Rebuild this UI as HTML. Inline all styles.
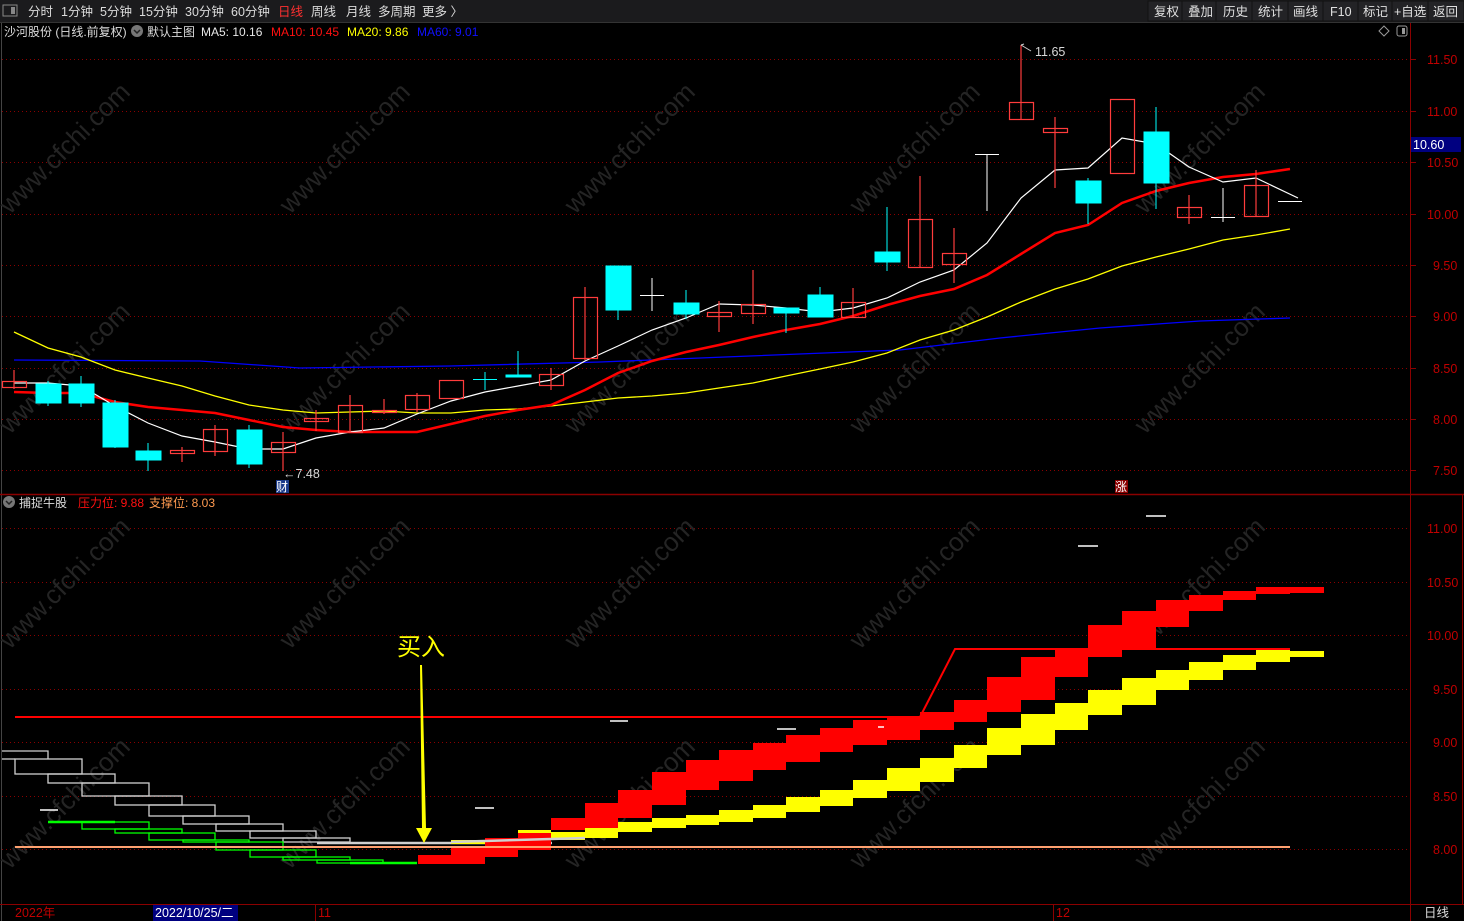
<!DOCTYPE html>
<html><head><meta charset="utf-8"><style>
body{margin:0;width:1464px;height:921px;background:#000;overflow:hidden;font-family:"Liberation Sans","Noto Sans CJK SC",sans-serif}
svg{display:block}
text{font-family:"Liberation Sans","Noto Sans CJK SC",sans-serif}
</style></head><body>
<svg width="1464" height="921" viewBox="0 0 1464 921" xmlns="http://www.w3.org/2000/svg">
<rect width="1464" height="921" fill="#000"/>
<rect x="0" y="0" width="1464" height="22" fill="#1b1b1d"/>
<line x1="0" y1="22.5" x2="1464" y2="22.5" stroke="#333"/>
<rect x="3" y="5" width="14" height="11" fill="none" stroke="#888"/><rect x="11" y="7" width="4" height="7" fill="#888"/>
<g font-size="12.5" fill="#dcdcdc">
<text x="28" y="16">分时</text><text x="61" y="16">1分钟</text><text x="100" y="16">5分钟</text><text x="139" y="16">15分钟</text><text x="185" y="16">30分钟</text><text x="231" y="16">60分钟</text><text x="278" y="16" fill="#ff3030">日线</text><text x="311" y="16">周线</text><text x="346" y="16">月线</text><text x="378" y="16">多周期</text><text x="422" y="16">更多 〉</text>
</g>
<g fill="#232326" stroke="#111">
<rect x="1148" y="1" width="34" height="20"/><rect x="1182" y="1" width="34" height="20"/><rect x="1216" y="1" width="36" height="20"/><rect x="1252" y="1" width="36" height="20"/><rect x="1288" y="1" width="35" height="20"/><rect x="1323" y="1" width="35" height="20"/><rect x="1358" y="1" width="34" height="20"/><rect x="1392" y="1" width="36" height="20"/><rect x="1428" y="1" width="36" height="20"/>
</g>
<g font-size="12.5" fill="#e0e0e0">
<text x="1154" y="16">复权</text><text x="1188" y="16">叠加</text><text x="1223" y="16">历史</text><text x="1258" y="16">统计</text><text x="1293" y="16">画线</text><text x="1330" y="16">F10</text><text x="1363" y="16">标记</text><text x="1394" y="16">+自选</text><text x="1433" y="16">返回</text>
</g>
<line x1="1.5" y1="23" x2="1.5" y2="921" stroke="#444"/>
<line x1="1410.5" y1="23" x2="1410.5" y2="921" stroke="#8b0000"/>
<line x1="0" y1="494.5" x2="1464" y2="494.5" stroke="#8b0000" stroke-width="1.5"/>
<line x1="0" y1="904.5" x2="1464" y2="904.5" stroke="#8b0000"/>
<line x1="1462.5" y1="494" x2="1462.5" y2="904" stroke="#8b0000"/>
<g stroke="#8b0000" stroke-dasharray="1,3">
<line x1="2" y1="59.5" x2="1410" y2="59.5"/><line x1="2" y1="111.5" x2="1410" y2="111.5"/><line x1="2" y1="162.5" x2="1410" y2="162.5"/><line x1="2" y1="214.5" x2="1410" y2="214.5"/><line x1="2" y1="265.5" x2="1410" y2="265.5"/><line x1="2" y1="316.5" x2="1410" y2="316.5"/><line x1="2" y1="368.5" x2="1410" y2="368.5"/><line x1="2" y1="419.5" x2="1410" y2="419.5"/><line x1="2" y1="470.5" x2="1410" y2="470.5"/>
<line x1="2" y1="528.5" x2="1410" y2="528.5"/><line x1="2" y1="582.5" x2="1410" y2="582.5"/><line x1="2" y1="635.5" x2="1410" y2="635.5"/><line x1="2" y1="689.5" x2="1410" y2="689.5"/><line x1="2" y1="742.5" x2="1410" y2="742.5"/><line x1="2" y1="796.5" x2="1410" y2="796.5"/><line x1="2" y1="849.5" x2="1410" y2="849.5"/>
</g>
<g stroke="#8b0000"><line x1="1411" y1="59.5" x2="1416" y2="59.5"/><line x1="1411" y1="111.5" x2="1416" y2="111.5"/><line x1="1411" y1="162.5" x2="1416" y2="162.5"/><line x1="1411" y1="214.5" x2="1416" y2="214.5"/><line x1="1411" y1="265.5" x2="1416" y2="265.5"/><line x1="1411" y1="316.5" x2="1416" y2="316.5"/><line x1="1411" y1="368.5" x2="1416" y2="368.5"/><line x1="1411" y1="419.5" x2="1416" y2="419.5"/><line x1="1411" y1="470.5" x2="1416" y2="470.5"/></g>
<g font-size="12.5" fill="#c00000">
<text x="1427" y="64">11.50</text><text x="1427" y="116">11.00</text><text x="1427" y="167">10.50</text><text x="1427" y="219">10.00</text><text x="1433" y="270">9.50</text><text x="1433" y="321">9.00</text><text x="1433" y="373">8.50</text><text x="1433" y="424">8.00</text><text x="1433" y="475">7.50</text>
<text x="1427" y="533">11.00</text><text x="1427" y="587">10.50</text><text x="1427" y="640">10.00</text><text x="1433" y="694">9.50</text><text x="1433" y="747">9.00</text><text x="1433" y="801">8.50</text><text x="1433" y="854">8.00</text>
</g>
<rect x="1411" y="137" width="50" height="15" fill="#000080"/><text x="1413" y="149" font-size="12.5" fill="#fff">10.60</text>
<g font-size="26" fill="#242424" font-family="Liberation Sans">
<text transform="translate(10,215) rotate(-45)">www.cfchi.com</text><text transform="translate(290,215) rotate(-45)">www.cfchi.com</text><text transform="translate(575,215) rotate(-45)">www.cfchi.com</text><text transform="translate(860,215) rotate(-45)">www.cfchi.com</text><text transform="translate(1145,215) rotate(-45)">www.cfchi.com</text>
<text transform="translate(10,435) rotate(-45)">www.cfchi.com</text><text transform="translate(290,435) rotate(-45)">www.cfchi.com</text><text transform="translate(575,435) rotate(-45)">www.cfchi.com</text><text transform="translate(860,435) rotate(-45)">www.cfchi.com</text><text transform="translate(1145,435) rotate(-45)">www.cfchi.com</text>
<text transform="translate(10,650) rotate(-45)">www.cfchi.com</text><text transform="translate(290,650) rotate(-45)">www.cfchi.com</text><text transform="translate(575,650) rotate(-45)">www.cfchi.com</text><text transform="translate(860,650) rotate(-45)">www.cfchi.com</text><text transform="translate(1145,650) rotate(-45)">www.cfchi.com</text>
<text transform="translate(10,870) rotate(-45)">www.cfchi.com</text><text transform="translate(290,870) rotate(-45)">www.cfchi.com</text><text transform="translate(575,870) rotate(-45)">www.cfchi.com</text><text transform="translate(860,870) rotate(-45)">www.cfchi.com</text><text transform="translate(1145,870) rotate(-45)">www.cfchi.com</text>
</g>
<g font-size="12">
<text x="4" y="36" fill="#dcdcdc">沙河股份 (日线.前复权)</text>
<circle cx="137" cy="31" r="6" fill="#777"/><path d="M134 30l3 3 3-3" stroke="#222" stroke-width="1.5" fill="none"/>
<text x="147" y="36" fill="#dcdcdc">默认主图</text>
<text x="201" y="36" fill="#e8e8e8">MA5: 10.16</text>
<text x="271" y="36" fill="#ff1010">MA10: 10.45</text>
<text x="347" y="36" fill="#ffff00">MA20: 9.86</text>
<text x="417" y="36" fill="#1010ff">MA60: 9.01</text>
</g>
<path d="M1384 26l5 5-5 5-5-5z" fill="none" stroke="#999"/><rect x="1397" y="26" width="10" height="10" rx="2" fill="none" stroke="#999"/><rect x="1402" y="28" width="3" height="6" fill="#999"/>
<polyline fill="none" stroke="#0000ff" stroke-width="1.3" points="14,360 200,361 300,368 450,366 600,362 750,356 900,350 1000,338 1100,328 1200,321 1290,318"/>
<polyline fill="none" stroke="#ffff00" stroke-width="1.3" points="14,332 48,348 81,357 115,370 148,378 182,386 215,396 249,405 283,410 316,413 350,412 384,411 417,413 451,413 485,410 518,409 551,406 585,402 618,398 652,396 686,393 719,388 753,383 786,376 820,369 853,362 887,353 920,340 954,330 987,317 1021,302 1055,289 1088,279 1122,266 1156,257 1189,249 1223,240 1256,235 1290,229"/>
<polyline fill="none" stroke="#ff0000" stroke-width="2.5" points="14,392 48,393 81,393 115,402 148,407 182,410 215,413 249,420 283,427 316,430 350,432 384,432 417,432 451,424 485,416 518,410 551,405 585,390 618,373 652,361 686,352 719,345 753,337 786,330 820,324 853,316 887,305 920,296 954,289 987,275 1021,254 1055,233 1088,225 1122,203 1156,191 1189,183 1223,177 1256,174 1290,169"/>
<polyline fill="none" stroke="#ffffff" stroke-width="1.2" points="14,383 48,383 81,386 115,406 148,423 182,436 215,442 249,449 283,449 316,438 350,432 384,428 417,414 451,401 485,392 518,386 551,380 585,361 618,346 652,330 686,318 719,304 753,305 786,308 820,312 853,308 887,298 920,282 954,270 987,243 1021,198 1055,170 1088,168 1122,138 1156,144 1189,167 1223,182 1256,178 1298,198"/>
<g stroke="#ff3c3c" fill="none" stroke-width="1.2">
<line x1="14" y1="370" x2="14" y2="389"/><rect x="2.5" y="381.5" width="24" height="6"/>
<line x1="182" y1="447" x2="182" y2="462"/><rect x="170.5" y="450.5" width="24" height="3"/>
<line x1="215" y1="425" x2="215" y2="456"/><rect x="203.5" y="429.5" width="24" height="22"/>
<line x1="283" y1="432" x2="283" y2="471"/><rect x="271.5" y="442.5" width="24" height="10"/>
<line x1="316" y1="410" x2="316" y2="431"/><rect x="304.5" y="418.5" width="24" height="3"/>
<line x1="350" y1="395" x2="350" y2="432"/><rect x="338.5" y="405.5" width="24" height="27"/>
<line x1="384" y1="399" x2="384" y2="414"/><rect x="372.5" y="410.5" width="24" height="2"/>
<line x1="417" y1="393" x2="417" y2="412"/><rect x="405.5" y="395.5" width="24" height="14"/>
<rect x="439.5" y="380.5" width="24" height="18"/>
<line x1="551" y1="368" x2="551" y2="390"/><rect x="539.5" y="374.5" width="24" height="11"/>
<line x1="585" y1="287" x2="585" y2="360"/><rect x="573.5" y="297.5" width="24" height="61"/>
<line x1="719" y1="301" x2="719" y2="332"/><rect x="707.5" y="312.5" width="24" height="4"/>
<line x1="753" y1="270" x2="753" y2="324"/><rect x="741.5" y="304.5" width="24" height="9"/>
<line x1="853" y1="288" x2="853" y2="317"/><rect x="841.5" y="302.5" width="24" height="15"/>
<line x1="920" y1="176" x2="920" y2="267"/><rect x="908.5" y="219.5" width="24" height="48"/>
<line x1="954" y1="228" x2="954" y2="283"/><rect x="942.5" y="253.5" width="24" height="11"/>
<line x1="1021" y1="45" x2="1021" y2="119"/><rect x="1009.5" y="102.5" width="24" height="17"/>
<line x1="1055" y1="117" x2="1055" y2="188"/><rect x="1043.5" y="128.5" width="24" height="4"/>
<rect x="1110.5" y="99.5" width="24" height="74"/>
<line x1="1189" y1="195" x2="1189" y2="224"/><rect x="1177.5" y="207.5" width="24" height="10"/>
<line x1="1256" y1="170" x2="1256" y2="216"/><rect x="1244.5" y="185.5" width="24" height="31"/>
</g>
<g stroke="#00ffff" fill="#00ffff">
<line x1="48" y1="381" x2="48" y2="406"/><rect x="36" y="384" width="25" height="19"/>
<line x1="81" y1="376" x2="81" y2="407"/><rect x="69" y="384" width="25" height="19"/>
<line x1="115" y1="400" x2="115" y2="448"/><rect x="103" y="403" width="25" height="44"/>
<line x1="148" y1="443" x2="148" y2="471"/><rect x="136" y="451" width="25" height="9"/>
<line x1="249" y1="425" x2="249" y2="468"/><rect x="237" y="430" width="25" height="34"/>
<line x1="485" y1="372" x2="485" y2="390"/><line x1="473" y1="379.5" x2="497" y2="379.5"/>
<line x1="518" y1="351" x2="518" y2="377"/><rect x="506" y="375" width="25" height="2"/>
<line x1="618" y1="266" x2="618" y2="320"/><rect x="606" y="266" width="25" height="44"/>
<line x1="686" y1="290" x2="686" y2="319"/><rect x="674" y="303" width="25" height="11"/>
<line x1="786" y1="308" x2="786" y2="333"/><rect x="774" y="308" width="25" height="5"/>
<line x1="820" y1="287" x2="820" y2="317"/><rect x="808" y="295" width="25" height="22"/>
<line x1="887" y1="207" x2="887" y2="271"/><rect x="875" y="252" width="25" height="10"/>
<line x1="1088" y1="178" x2="1088" y2="224"/><rect x="1076" y="181" width="25" height="22"/>
<line x1="1156" y1="107" x2="1156" y2="209"/><rect x="1144" y="132" width="25" height="51"/>
</g>
<g stroke="#fff">
<line x1="652" y1="278" x2="652" y2="311"/><line x1="640" y1="295.5" x2="664" y2="295.5"/>
<line x1="987" y1="154" x2="987" y2="211"/><line x1="975" y1="154.5" x2="999" y2="154.5"/>
<line x1="1223" y1="188" x2="1223" y2="222"/><line x1="1211" y1="217.5" x2="1235" y2="217.5"/>
<line x1="1278" y1="201.5" x2="1302" y2="201.5"/>
</g>
<path d="M1021 45l3 -1M1021 45l10 6" stroke="#ccc" fill="none"/>
<text x="1035" y="56" font-size="12.5" fill="#d8d8d8">11.65</text>
<text x="283" y="478" font-size="12.5" fill="#d8d8d8">←7.48</text>
<rect x="276" y="480" width="13" height="13" fill="#1a3a8a"/><text x="276" y="491" font-size="12" fill="#fff">财</text>
<rect x="1115" y="480" width="13" height="13" fill="#8b0000"/><text x="1115" y="491" font-size="12" fill="#fff">涨</text>
<circle cx="9" cy="502" r="6" fill="#777"/><path d="M6 501l3 3 3-3" stroke="#222" stroke-width="1.5" fill="none"/>
<g font-size="12"><text x="19" y="507" fill="#dcdcdc">捕捉牛股</text><text x="78" y="507" fill="#ff1010">压力位: 9.88</text><text x="149" y="507" fill="#ff9a50">支撑位: 8.03</text></g>
<g fill="none" stroke="#d0d0d0" stroke-width="1.3">
<path d="M2 751H48V759"/><line x1="2" y1="759" x2="15" y2="759"/>
<rect x="15" y="759" width="67" height="15"/><rect x="48" y="774" width="67" height="9"/><rect x="82" y="783" width="67" height="13"/><rect x="115" y="796" width="67" height="9"/><rect x="149" y="805" width="66" height="11"/><rect x="183" y="816" width="66" height="8"/><rect x="216" y="824" width="67" height="7"/><rect x="250" y="831" width="66" height="7"/><rect x="283" y="838" width="67" height="4"/>
</g>
<line x1="317" y1="843" x2="552" y2="843" stroke="#d0d0d0" stroke-width="2.5"/>
<g fill="none" stroke="#00ff00" stroke-width="1.3">
<line x1="48" y1="822" x2="115" y2="822" stroke-width="2.5"/>
<rect x="82" y="822" width="67" height="7"/><rect x="115" y="829" width="67" height="4"/><rect x="149" y="833" width="66" height="7"/><rect x="183" y="840" width="66" height="2"/><rect x="216" y="842" width="67" height="8"/><rect x="250" y="850" width="66" height="7"/><rect x="283" y="857" width="67" height="3"/><rect x="317" y="860" width="66" height="3"/>
<line x1="350" y1="863" x2="417" y2="863" stroke-width="2.5"/>
</g>
<line x1="15" y1="717" x2="920" y2="717" stroke="#ff0000" stroke-width="2"/>
<polyline points="920,717 955,649 1290,649" fill="none" stroke="#ff0000" stroke-width="2"/>
<g fill="#ffff00">
<rect x="451" y="840" width="34" height="4"/><rect x="518" y="830" width="33" height="5"/><rect x="551" y="832" width="34" height="8"/><rect x="585" y="826" width="33" height="12"/><rect x="618" y="822" width="34" height="10"/><rect x="652" y="818" width="34" height="10"/><rect x="686" y="815" width="33" height="10"/><rect x="719" y="810" width="34" height="12"/><rect x="753" y="805" width="33" height="13"/><rect x="786" y="797" width="34" height="15"/><rect x="820" y="790" width="33" height="16"/><rect x="853" y="780" width="34" height="18"/><rect x="887" y="768" width="33" height="23"/><rect x="920" y="758" width="34" height="24"/><rect x="954" y="745" width="33" height="23"/><rect x="987" y="728" width="34" height="27"/><rect x="1021" y="714" width="34" height="31"/><rect x="1055" y="703" width="33" height="27"/><rect x="1088" y="690" width="34" height="25"/><rect x="1122" y="678" width="34" height="27"/><rect x="1156" y="670" width="33" height="20"/><rect x="1189" y="662" width="34" height="18"/><rect x="1223" y="655" width="33" height="15"/><rect x="1256" y="650" width="34" height="12"/><rect x="1290" y="651" width="34" height="6"/>
</g>
<g fill="#ff0000">
<rect x="418" y="855" width="33" height="9"/><rect x="451" y="846" width="34" height="18"/><rect x="485" y="838" width="33" height="19"/><rect x="518" y="833" width="33" height="17"/><rect x="551" y="818" width="34" height="12"/><rect x="585" y="803" width="33" height="25"/><rect x="618" y="790" width="34" height="28"/><rect x="652" y="772" width="34" height="33"/><rect x="686" y="760" width="33" height="30"/><rect x="719" y="750" width="34" height="31"/><rect x="753" y="743" width="33" height="27"/><rect x="786" y="735" width="34" height="27"/><rect x="820" y="728" width="33" height="24"/><rect x="853" y="720" width="34" height="25"/><rect x="887" y="716" width="33" height="24"/><rect x="920" y="712" width="34" height="18"/><rect x="954" y="700" width="33" height="22"/><rect x="987" y="677" width="34" height="35"/><rect x="1021" y="657" width="34" height="43"/><rect x="1055" y="648" width="33" height="29"/><rect x="1088" y="625" width="34" height="32"/><rect x="1122" y="611" width="34" height="37"/><rect x="1156" y="600" width="33" height="27"/><rect x="1189" y="595" width="34" height="16"/><rect x="1223" y="591" width="33" height="9"/><rect x="1256" y="587" width="34" height="7"/><rect x="1290" y="587" width="34" height="6"/>
</g>
<line x1="451" y1="842" x2="585" y2="838" stroke="#d0d0d0" stroke-width="2.5"/>
<line x1="15" y1="847" x2="1290" y2="847" stroke="#ffa070" stroke-width="2"/>
<g stroke="#fff" stroke-width="1.5">
<line x1="40" y1="810" x2="58" y2="810"/><line x1="475" y1="808" x2="494" y2="808"/><line x1="610" y1="721" x2="628" y2="721"/><line x1="777" y1="729" x2="796" y2="729"/><line x1="878" y1="727" x2="884" y2="727"/><line x1="1078" y1="546" x2="1098" y2="546"/><line x1="1146" y1="516" x2="1166" y2="516"/>
</g>
<path d="M420 665L422 665L426 828L432 828L424 843L416 828L422 828Z" fill="#ffff00"/>
<text x="397" y="655" font-size="24" fill="#ffff00">买入</text>
<text x="15" y="917" font-size="12.5" fill="#c00000">2022年</text>
<rect x="153" y="905" width="85" height="16" fill="#000080"/><text x="155" y="917" font-size="12.5" fill="#fff">2022/10/25/二</text>
<line x1="315.5" y1="905" x2="315.5" y2="921" stroke="#8b0000"/><text x="318" y="917" font-size="12.5" fill="#c00000">11</text>
<line x1="1053.5" y1="905" x2="1053.5" y2="921" stroke="#8b0000"/><text x="1056" y="917" font-size="12.5" fill="#c00000">12</text>
<text x="1424" y="917" font-size="12.5" fill="#dcdcdc">日线</text>
</svg>
</body></html>
